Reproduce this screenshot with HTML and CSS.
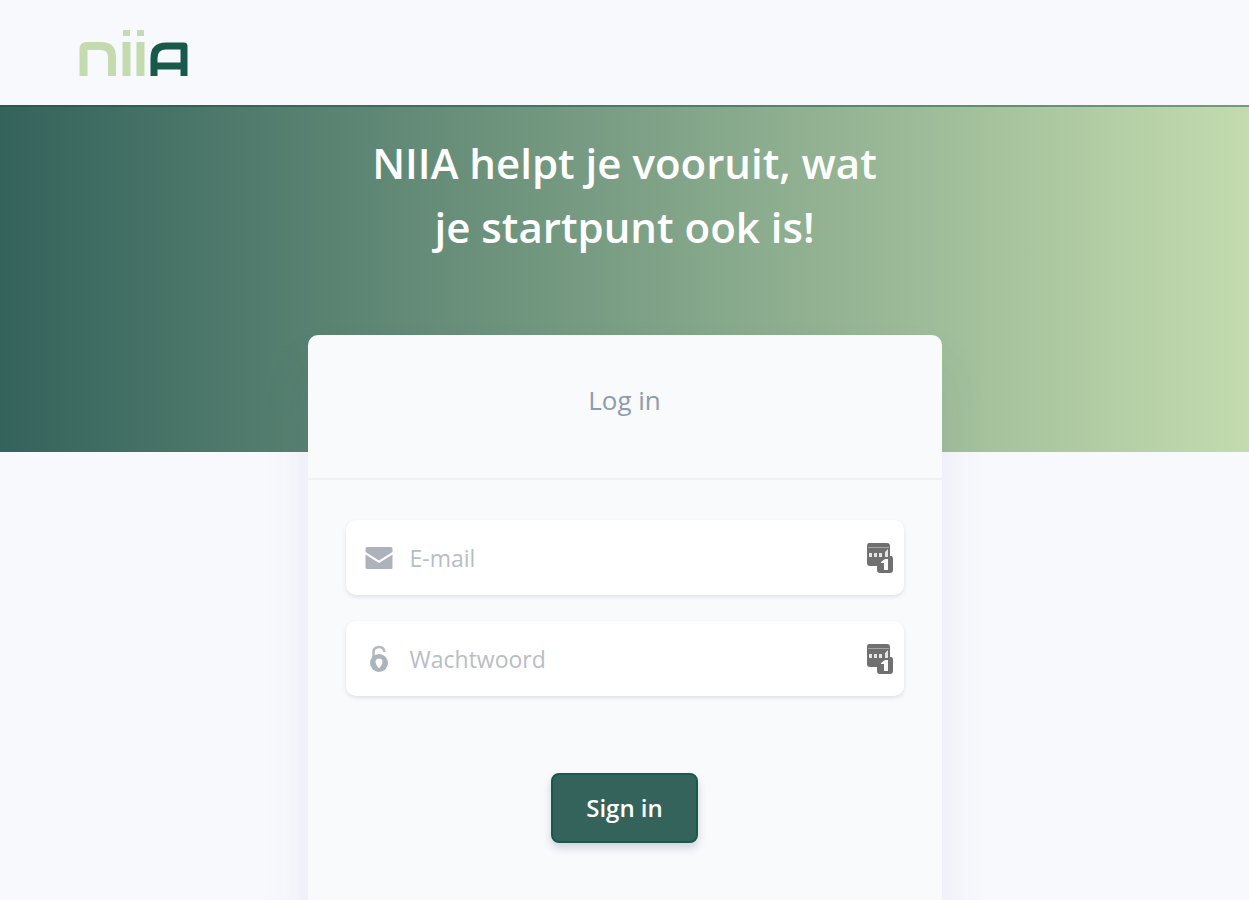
FILE: index.html
```html
<!DOCTYPE html>
<html lang="nl">
<head>
<meta charset="utf-8">
<meta name="viewport" content="width=device-width, initial-scale=1">
<title>NIIA</title>
<link rel="stylesheet" href="styles.css">
</head>
<body>
<header class="topbar">
  <a class="brand" href="#" aria-label="NIIA">
    <svg class="logo" viewBox="0 0 110 48" fill="none" aria-hidden="true">
      <g stroke="#c3dbae" stroke-width="8">
        <path d="M4.500 47V20Q4.500 17 8 17H22Q33 17 33 28V47"/>
        <path d="M47.500 13V47M61.500 13V47"/>
        <path stroke-width="7" d="M47.500 1V7M61.500 1V7"/>
      </g>
      <path d="M75 47V29Q75 17 87 17H105V47M75 37H105" stroke="#17594b" stroke-width="7" stroke-linejoin="round"/>
    </svg>
  </a>
</header>
<main>
  <section class="hero">
    <h1 class="hero-title">NIIA helpt je vooruit, wat je startpunt ook is!</h1>
  </section>
  <section class="card">
    <h2 class="card-header">Log in</h2>
    <form class="card-body">
      <div class="field">
        <label class="field-icon" for="email" aria-label="E-mail">
          <svg width="28" height="24" viewBox="0 0 28 24" aria-hidden="true">
            <path fill="#adb3bd" d="M2 1H26Q27.500 1 27.500 3V6L14 14.500.5 6V3Q.5 1 2 1ZM.5 8.500 14 17 27.500 8.500V21.500Q27.500 23 26 23H2Q.5 23 .5 21.500Z"/>
          </svg>
        </label>
        <input class="input" id="email" type="email" placeholder="E-mail">
        <svg class="manager" width="28" height="32" viewBox="0 0 28 32" aria-hidden="true">
          <path fill="#707070" d="M3 1H21Q24 1 24 4V14H25Q27 14 27 17V28Q27 31 24 31H14Q11 31 11 28V24H4Q1 24 1 21V4Q1 1 3 1Z"/>
          <path stroke="#a5a5a5" d="M2 5.500H23"/>
          <path fill="#e4e4e4" d="M3 11H6V15H3ZM8 11H11V15H8ZM13 11H16V15H13ZM19 10 22 7V15H19Z"/>
          <path fill="#fafafa" d="M15 20 19 17H22V28H18V21H15Z"/>
        </svg>
      </div>
      <div class="field">
        <label class="field-icon" for="password" aria-label="Wachtwoord">
          <svg width="20" height="28" viewBox="0 0 20 28" aria-hidden="true">
            <path fill="none" stroke="#b4b9c2" stroke-width="2.500" d="M4.500 13V7.500Q4.500 2 10 2Q15 2 15.500 7"/>
            <circle cx="10" cy="18" r="9" fill="#adb3bd"/>
            <path fill="#fff" d="M10 13.500A3.500 3.500 0 0 1 13.500 17Q13.500 19 10 23.500Q6.500 19 6.500 17A3.500 3.500 0 0 1 10 13.500Z"/>
          </svg>
        </label>
        <input class="input" id="password" type="password" placeholder="Wachtwoord">
        <svg class="manager" width="28" height="32" viewBox="0 0 28 32" aria-hidden="true">
          <path fill="#707070" d="M3 1H21Q24 1 24 4V14H25Q27 14 27 17V28Q27 31 24 31H14Q11 31 11 28V24H4Q1 24 1 21V4Q1 1 3 1Z"/>
          <path stroke="#a5a5a5" d="M2 5.500H23"/>
          <path fill="#e4e4e4" d="M3 11H6V15H3ZM8 11H11V15H8ZM13 11H16V15H13ZM19 10 22 7V15H19Z"/>
          <path fill="#fafafa" d="M15 20 19 17H22V28H18V21H15Z"/>
        </svg>
      </div>
      <button class="submit" type="submit">Sign in</button>
    </form>
  </section>
</main>
</body>
</html>
```

FILE: styles.css
```css
* {
  box-sizing: border-box;
}

body {
  margin: 0;
  background: #f8f9fd;
  font-family: "Open Sans", "Noto Sans", sans-serif;
}

.topbar {
  padding: 29px 79px 28px;
}

.brand {
  display: block;
  width: 110px;
}

.logo {
  display: block;
  width: 100%;
}

.hero {
  padding: 24px 24px 193px;
  border-top: 2px solid rgba(10, 80, 65, 0.45);
  background: linear-gradient(90deg, #34635c 0%, #c3dbae 100%) border-box;
}

.hero-title {
  max-width: 528px;
  margin: 0 auto;
  color: #fff;
  font-size: 42px;
  font-weight: 600;
  line-height: 64px;
  text-align: center;
}

.card {
  width: calc(100% - 48px);
  max-width: 634px;
  margin: -117px auto 0;
  border-radius: 10px;
  background: #f8fafc;
  box-shadow: 0 30px 50px rgba(80, 80, 150, 0.09);
}

.card-header {
  margin: 0;
  padding: 45px 38px 57px;
  border-bottom: 2px solid #eff1f3;
  color: #8f9bad;
  font-size: 26px;
  font-weight: 400;
  line-height: 41px;
  text-align: center;
}

.card-body {
  display: flex;
  flex-direction: column;
  gap: 26px;
  padding: 40px 38px 96px;
}

.field {
  display: flex;
  align-items: center;
  height: 75px;
  padding: 0 10px 0 18px;
  border-radius: 10px;
  background: #fff;
  box-shadow: 0 2px 4px rgba(50, 50, 93, 0.12);
}

.field-icon {
  display: flex;
  justify-content: center;
  width: 30px;
}

.input {
  flex: 1;
  min-width: 0;
  height: 100%;
  padding: 0 16px;
  border: 0;
  outline: 0;
  background: transparent;
  color: #8898aa;
  font: 400 23px "Open Sans", "Noto Sans", sans-serif;
}

.input::placeholder {
  color: #b9bdc4;
  opacity: 1;
}

.manager {
  flex: none;
}

.submit {
  align-self: center;
  margin-top: 51px;
  padding: 17px 33px;
  border: 2px solid #17594b;
  border-radius: 8px;
  background: #34635c;
  box-shadow: 0 5px 9px rgba(50, 50, 93, 0.2);
  color: #fff;
  font: 600 24px/32px "Open Sans", "Noto Sans", sans-serif;
}
```
